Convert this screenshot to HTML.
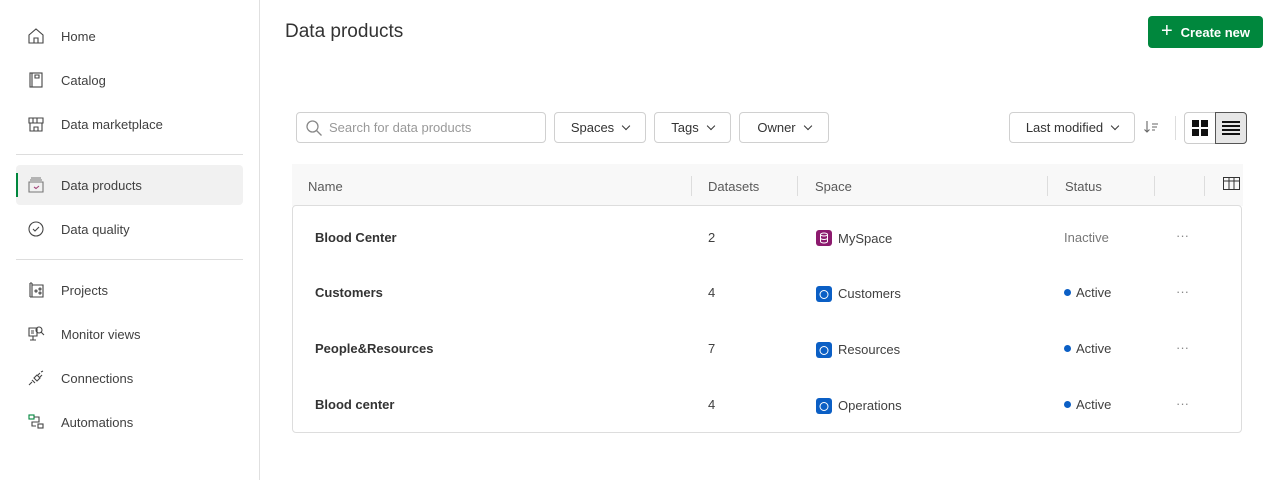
<!DOCTYPE html><html><head><style>
*{box-sizing:border-box;margin:0;padding:0}
body{width:1273px;height:480px;background:#fff;font-family:"Liberation Sans",sans-serif;color:#404040;position:relative;overflow:hidden;font-size:13px}
.a{position:absolute}
.nav{left:61px;font-size:13px;color:#404040;line-height:16px}
.ic{left:27px;width:18px;height:18px}
.btn{border:1px solid #d0d0d0;border-radius:4px;height:31px;top:112px;display:flex;align-items:center;justify-content:center;font-size:13px;color:#333}
.chev{display:inline-block;width:6px;height:6px;border-right:1.6px solid #333;border-bottom:1.6px solid #333;transform:rotate(45deg);margin-left:9px;margin-top:-4px}
.sep{width:1px;height:20px;background:#ddd;top:176px}
.hd{top:179px;font-size:13px;color:#595959}
.row{font-size:13px;line-height:16px}
.sp{width:16px;height:16px;border-radius:3px}
.dot{width:7px;height:7px;border-radius:50%;background:#0b5fc5}
</style></head><body>
<div class="a" style="left:259px;top:0;width:1px;height:480px;background:#e0e0e0"></div>
<div class="a" style="left:16px;top:154px;width:227px;height:1px;background:#ddd"></div>
<div class="a" style="left:16px;top:259px;width:227px;height:1px;background:#ddd"></div>
<div class="a" style="left:16px;top:165px;width:227px;height:40px;background:#f1f1f1;border-radius:4px"></div>
<div class="a" style="left:16px;top:173px;width:2px;height:24px;background:#00873d"></div>

<svg class="a ic" style="top:27px" viewBox="0 0 18 18" fill="none" stroke="#444" stroke-width="1.1"><path d="M2 8L9 2l7 6v8H2z M7 16v-5h4v5"/></svg>
<svg class="a ic" style="top:71px" viewBox="0 0 18 18" fill="none" stroke="#444" stroke-width="1.1"><rect x="3" y="2" width="12" height="14"/><path d="M5 2v14M8 4h4v3H8z"/></svg>
<svg class="a ic" style="top:115px" viewBox="0 0 18 18" fill="none" stroke="#444" stroke-width="1.1"><path d="M2 3h14v5H2zM6 3v5M10 3v5M3 8v8h12V8M7 16v-4h4v4"/></svg>
<svg class="a ic" style="top:176px" viewBox="0 0 18 18" fill="none" stroke="#777" stroke-width="1.1"><path d="M4 2h10M3 4h12M2 6h14v10H2z"/><path d="M7 11l2 1.5 3-2.5" stroke="#a2467a"/></svg>
<svg class="a ic" style="top:220px" viewBox="0 0 18 18" fill="none" stroke="#444" stroke-width="1.1"><circle cx="9" cy="9" r="7"/><path d="M6 9l2 2 4-4"/></svg>
<svg class="a ic" style="top:281px" viewBox="0 0 18 18" fill="none" stroke="#444" stroke-width="1.1"><path d="M3 2v14M5 2v14M3 2h2M5 4h11v12H3"/><circle cx="9" cy="10" r="1"/><circle cx="13" cy="8" r="1"/><circle cx="13" cy="12" r="1"/></svg>
<svg class="a ic" style="top:325px" viewBox="0 0 18 18" fill="none" stroke="#444" stroke-width="1.1"><path d="M2 3h8v8H2zM4 6h3M4 8h3M6 11v4M3 15h6"/><circle cx="12" cy="5" r="3"/><path d="M14 7l3 3"/></svg>
<svg class="a ic" style="top:369px" viewBox="0 0 18 18" fill="none" stroke="#444" stroke-width="1.1"><path d="M2 16l3-3M5 11l3 3M7 9l3 3 3-3-3-3zM11 6l2-2M13 8l2-2M14 3l2-1"/></svg>
<svg class="a ic" style="top:413px" viewBox="0 0 18 18" fill="none" stroke-width="1.1"><rect x="2" y="2" width="5" height="4" stroke="#00873d"/><path d="M7 4h5v5H5v4h4" stroke="#444"/><rect x="11" y="11" width="5" height="4" stroke="#444"/></svg>

<div class="a nav" style="top:29px">Home</div>
<div class="a nav" style="top:73px">Catalog</div>
<div class="a nav" style="top:117px">Data marketplace</div>
<div class="a nav" style="top:178px">Data products</div>
<div class="a nav" style="top:222px">Data quality</div>
<div class="a nav" style="top:283px">Projects</div>
<div class="a nav" style="top:327px">Monitor views</div>
<div class="a nav" style="top:371px">Connections</div>
<div class="a nav" style="top:415px">Automations</div>

<div class="a" style="left:285px;top:21px;font-size:19px;color:#333">Data products</div>
<div class="a" style="left:1148px;top:16px;width:115px;height:32px;background:#00873d;border-radius:4px;color:#fff;font-weight:bold;font-size:13px;display:flex;align-items:center;justify-content:center"><span style="font-size:20px;font-weight:normal;margin-right:8px;margin-top:-2px">+</span>Create new</div>

<div class="a btn" style="left:296px;width:250px;justify-content:flex-start;padding-left:8px;color:#999"><svg width="18" height="18" viewBox="0 0 18 18" fill="none" stroke="#888" stroke-width="1.3"><circle cx="7.5" cy="7.5" r="5.5"/><path d="M11.5 11.5l5 5"/></svg><span style="margin-left:6px">Search for data products</span></div>
<div class="a btn" style="left:554px;width:92px">Spaces<i class="chev"></i></div>
<div class="a btn" style="left:654px;width:77px">Tags<i class="chev"></i></div>
<div class="a btn" style="left:739px;width:90px">Owner<i class="chev"></i></div>
<div class="a btn" style="left:1009px;width:126px">Last modified<i class="chev"></i></div>
<svg class="a" style="left:1143px;top:119px" width="18" height="16" viewBox="0 0 18 16" fill="none" stroke="#666" stroke-width="1.1"><path d="M4 2v11M1.5 10.5L4 13l2.5-2.5M9 5h6M9 8h5M9 11h3"/></svg>
<div class="a" style="left:1175px;top:116px;width:1px;height:24px;background:#ddd"></div>
<div class="a" style="left:1184px;top:112px;width:63px;height:32px;border:1px solid #ccc;border-radius:4px"></div>
<div class="a" style="left:1215px;top:112px;width:32px;height:32px;border:1px solid #555;border-radius:0 4px 4px 0;background:#e6e6e6"></div>
<svg class="a" style="left:1192px;top:120px" width="16" height="16" viewBox="0 0 16 16" fill="#111"><rect x="0" y="0" width="7" height="7"/><rect x="9" y="0" width="7" height="7"/><rect x="0" y="9" width="7" height="7"/><rect x="9" y="9" width="7" height="7"/></svg>
<svg class="a" style="left:1222px;top:120px" width="18" height="16" viewBox="0 0 18 16" fill="#111"><rect y="1" width="18" height="2"/><rect y="5" width="18" height="2"/><rect y="9" width="18" height="2"/><rect y="13" width="18" height="2"/></svg>

<div class="a" style="left:292px;top:164px;width:951px;height:42px;background:#f8f8f8"></div>
<div class="a hd" style="left:308px">Name</div>
<div class="a hd" style="left:708px">Datasets</div>
<div class="a hd" style="left:815px">Space</div>
<div class="a hd" style="left:1065px">Status</div>
<div class="a sep" style="left:691px"></div><div class="a sep" style="left:797px"></div><div class="a sep" style="left:1047px"></div><div class="a sep" style="left:1154px"></div><div class="a sep" style="left:1204px"></div>
<svg class="a" style="left:1223px;top:177px" width="17" height="13" viewBox="0 0 17 13" fill="none" stroke="#333" stroke-width="1"><rect x=".5" y=".5" width="16" height="12"/><path d="M.5 4h16M6 .5v12M11 .5v12"/></svg>
<div class="a" style="left:292px;top:205px;width:950px;height:228px;border:1px solid #ddd;border-radius:4px"></div>

<div class="a row" style="top:230px;left:315px;font-weight:bold;color:#333">Blood Center</div>
<div class="a row" style="top:230px;left:708px">2</div>
<svg class="a sp" style="left:816px;top:230px;background:#8c1a6e" viewBox="0 0 16 16" fill="none" stroke="#fff" stroke-width="1"><ellipse cx="8" cy="4.5" rx="3.5" ry="1.5"/><path d="M4.5 4.5v7c0 .8 1.6 1.5 3.5 1.5s3.5-.7 3.5-1.5v-7M4.5 8c0 .8 1.6 1.5 3.5 1.5s3.5-.7 3.5-1.5"/></svg>
<div class="a row" style="top:231px;left:838px">MySpace</div>
<div class="a row" style="top:230px;left:1064px;color:#777">Inactive</div>
<div class="a row" style="top:228px;left:1176px;color:#888">···</div>

<div class="a row" style="top:285px;left:315px;font-weight:bold;color:#333">Customers</div>
<div class="a row" style="top:285px;left:708px">4</div>
<svg class="a sp" style="left:816px;top:286px;background:#0b5fc5" viewBox="0 0 16 16" fill="none" stroke="#fff" stroke-width="1"><circle cx="8" cy="8.5" r="4"/></svg>
<div class="a row" style="top:286px;left:838px">Customers</div>
<div class="a dot" style="left:1064px;top:289px"></div><div class="a row" style="top:285px;left:1076px">Active</div>
<div class="a row" style="top:284px;left:1176px;color:#888">···</div>

<div class="a row" style="top:341px;left:315px;font-weight:bold;color:#333">People&amp;Resources</div>
<div class="a row" style="top:341px;left:708px">7</div>
<svg class="a sp" style="left:816px;top:342px;background:#0b5fc5" viewBox="0 0 16 16" fill="none" stroke="#fff" stroke-width="1"><circle cx="8" cy="8.5" r="4"/></svg>
<div class="a row" style="top:342px;left:838px">Resources</div>
<div class="a dot" style="left:1064px;top:345px"></div><div class="a row" style="top:341px;left:1076px">Active</div>
<div class="a row" style="top:340px;left:1176px;color:#888">···</div>

<div class="a row" style="top:397px;left:315px;font-weight:bold;color:#333">Blood center</div>
<div class="a row" style="top:397px;left:708px">4</div>
<svg class="a sp" style="left:816px;top:398px;background:#0b5fc5" viewBox="0 0 16 16" fill="none" stroke="#fff" stroke-width="1"><circle cx="8" cy="8.5" r="4"/></svg>
<div class="a row" style="top:398px;left:838px">Operations</div>
<div class="a dot" style="left:1064px;top:401px"></div><div class="a row" style="top:397px;left:1076px">Active</div>
<div class="a row" style="top:396px;left:1176px;color:#888">···</div>
</body></html>
